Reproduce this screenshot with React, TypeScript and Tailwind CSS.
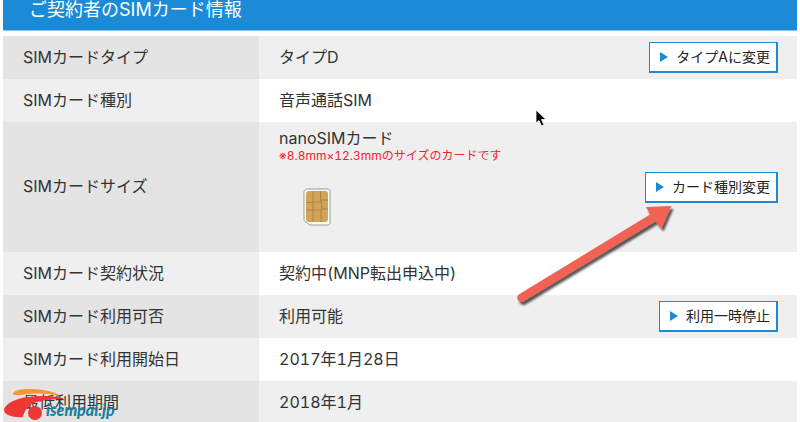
import type { ReactNode } from "react";
import clsx from "clsx";

interface InfoRow {
    label: string;
    value: ReactNode;
    action?: string;
}

function SimChip() {
    return (
        <svg width="28" height="38" viewBox="0 0 28 38" aria-hidden="true">
            <path d="M3.500 1h22l1.500 1.500v33l-1.500 1.500H7L1 32.500V3.500z" fill="#fdfdfd" stroke="#9a9a9a" strokeWidth="1" />
            <rect x="3" y="3" width="22" height="31" rx="3" fill="#d3a457" />
            <path
                d="M10 3v11M17.500 3v11M3 14.500h7M18 12h7M10 14h8.500v8h-8.500zM3 22h7M18.500 21h6.500M10 22v12M18 22v12"
                fill="none"
                stroke="#a37d40"
                strokeWidth="0.8"
            />
        </svg>
    );
}

function ActionButton({ label }: { label: string }) {
    return (
        <button
            type="button"
            className="inline-flex items-center gap-2 border border-r-2 border-b-2 border-[#1b8bd8] bg-white pt-1 pr-1.5 pb-1 pl-2.5 text-sm leading-5 whitespace-nowrap text-[#222]"
        >
            <svg width="8" height="10" viewBox="0 0 8 10" aria-hidden="true">
                <path d="M0 0L8 5L0 10z" fill="#1b8bd8" />
            </svg>
            {label}
        </button>
    );
}

function PointerArrow() {
    return (
        <svg
            className="pointer-events-none absolute top-[198px] right-[112px]"
            width="176"
            height="112"
            viewBox="0 0 176 112"
            aria-hidden="true"
        >
            <defs>
                <filter id="arrow-shadow" x="-10%" y="-10%" width="120%" height="120%">
                    <feDropShadow dx="2" dy="3" stdDeviation="1" floodColor="#000" floodOpacity="0.65" />
                </filter>
            </defs>
            <path
                d="M7.500 96L138 16.500L134 9L159.500 8L149.500 30.500L143.500 23.500L11.500 103.500A4 4 0 0 1 7.500 96z"
                fill="#f06253"
                filter="url(#arrow-shadow)"
            />
        </svg>
    );
}

function Cursor() {
    return (
        <svg
            className="pointer-events-none absolute top-[109px] right-[253px]"
            width="12"
            height="18"
            viewBox="0 0 12 18"
            aria-hidden="true"
        >
            <path d="M1 1V14L4 11.500L6.500 17L9 16L6.500 10.500H11z" fill="#000" stroke="#fff" strokeWidth="0.8" />
        </svg>
    );
}

function SiteMark() {
    return (
        <div className="pointer-events-none absolute bottom-0 left-1 flex h-9">
            <svg width="62" height="34" viewBox="0 0 62 34" aria-hidden="true">
                <path d="M9 6C9 3 15 1 26 1C40 1 51 4 56 7.500C44 5.500 31 4.500 20 6.500C15 7.500 9 7.500 9 6z" fill="#f79433" />
                <path
                    d="M0 22C1 15 15 9 29 8.500C41 7.500 53 8 61 11C49 11 37 12 30 15C23 18 20 24 19 29C10 30 0 27 0 22z"
                    fill="#ef3733"
                />
                <circle cx="31" cy="25" r="7" fill="#ef3733" />
            </svg>
            <span className="-ml-5 self-end pb-1 font-['Lato',sans-serif] text-base leading-5 font-black text-[#187f9f] italic">
                isempai.jp
            </span>
        </div>
    );
}

const rows: InfoRow[] = [
    { label: "SIMカードタイプ", value: "タイプD", action: "タイプAに変更" },
    { label: "SIMカード種別", value: "音声通話SIM" },
    {
        label: "SIMカードサイズ",
        value: (
            <>
                <p className="pt-1.5 leading-5">nanoSIMカード</p>
                <p className="text-xs leading-4 text-[#f5222d]">※8.8mm×12.3mmのサイズのカードです</p>
                <div className="pt-6 pb-6 pl-6">
                    <SimChip />
                </div>
            </>
        ),
        action: "カード種別変更",
    },
    { label: "SIMカード契約状況", value: "契約中(MNP転出申込中)" },
    { label: "SIMカード利用可否", value: "利用可能", action: "利用一時停止" },
    { label: "SIMカード利用開始日", value: "2017年1月28日" },
    { label: "最低利用期間", value: "2018年1月" },
];

export default function App() {
    return (
        <main className="relative bg-white px-[3px] font-['Inter','Noto_Sans_CJK_JP',sans-serif] text-base text-[#333] tabular-nums">
            <h2 className="border-b border-[#8cc6ee] bg-[#1b8bd8] px-[26px] pb-2.5 text-lg leading-5 font-normal text-white">
                ご契約者のSIMカード情報
            </h2>

            <table className="mt-[5px] w-full border-collapse">
                <tbody>
                    {rows.map((row, index) => (
                        <tr key={row.label} className={clsx("h-[43px]", index % 2 === 0 ? "bg-[#efefef]" : "bg-white")}>
                            <th
                                scope="row"
                                className={clsx(
                                    "w-[256px] pb-0.5 pl-5 text-left font-normal",
                                    index % 2 === 0 ? "bg-[#e4e4e4]" : "bg-[#efefef]",
                                )}
                            >
                                {row.label}
                            </th>
                            <td className="pr-[19px] pl-5">
                                <div className="flex items-center justify-between">
                                    <div className="pb-0.5">{row.value}</div>
                                    {row.action && <ActionButton label={row.action} />}
                                </div>
                            </td>
                        </tr>
                    ))}
                </tbody>
            </table>

            <Cursor />
            <PointerArrow />
            <SiteMark />
        </main>
    );
}
